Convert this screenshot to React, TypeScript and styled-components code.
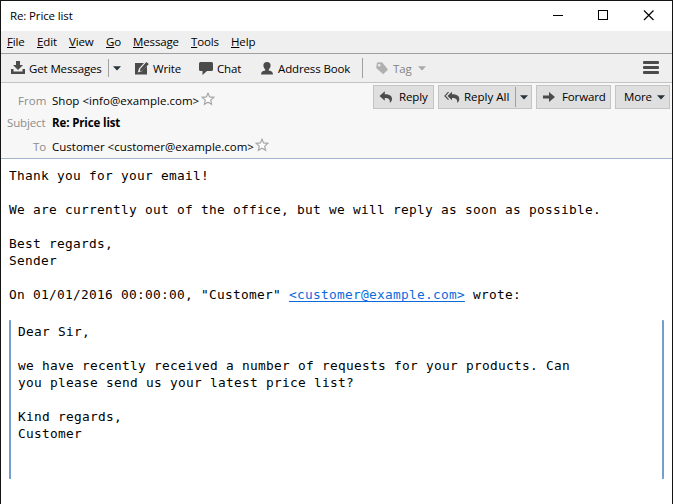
import React from "react";
import styled, { createGlobalStyle } from "styled-components";

const GlobalStyle = createGlobalStyle`
  * { box-sizing: border-box; }
  body { margin: 0; background: #fff; }
`;

const Window = styled.div`
  display: flex;
  flex-direction: column;
  width: 673px;
  height: 504px;
  overflow: hidden;
  border: 1px solid #141414;
  border-bottom: 0;
  background: #fff;
  color: #000;
  font: 11.5px/16px "Open Sans", "Noto Sans", sans-serif;
  white-space: nowrap;
`;

const TitleBar = styled.header`
  display: flex;
  flex: none;
  height: 30px;
  padding-left: 9px;
`;

const Label = styled.span<{ $w: number; $ls?: number }>`
  display: block;
  flex: none;
  width: ${(p) => p.$w}px;
  letter-spacing: ${(p) => p.$ls ?? -0.13}px;
`;

const Title = styled(Label)`
  margin-top: 7px;
`;

const WindowControls = styled.div`
  display: flex;
  margin-left: auto;
  svg { display: block; }
`;

const MenuBar = styled.nav`
  display: flex;
  flex: none;
  gap: 12px;
  height: 23px;
  padding: 3px 0 0 6px;
  background: #efefef;
  border-bottom: 1px solid #a0a0a0;
  u { text-underline-offset: 1px; text-decoration-thickness: 1px; }
`;

const Toolbar = styled.div`
  display: flex;
  flex: none;
  align-items: center;
  height: 29px;
  padding: 0 13px 0 10px;
  background: #efefef;
  border-bottom: 1px solid #c3c3c3;
`;

const ToolItem = styled.div<{ $gap: number; $ml?: number; $muted?: boolean }>`
  display: flex;
  align-items: center;
  gap: ${(p) => p.$gap}px;
  margin-left: ${(p) => p.$ml ?? 0}px;
  color: ${(p) => (p.$muted ? "#838383" : "#000")};
  ${Label} { margin-top: 2px; }
`;

const Divider = styled.span<{ $h: number; $ml: number; $mr: number }>`
  flex: none;
  width: 1px;
  height: ${(p) => p.$h}px;
  margin: 0 ${(p) => p.$mr}px 0 ${(p) => p.$ml}px;
  background: #a0a0a0;
`;

const Icon = styled.svg`
  display: block;
  flex: none;
`;

const MenuIcon = styled.div`
  display: grid;
  gap: 2px;
  margin: -1px 0 0 auto;
  span {
    width: 16px;
    height: 3px;
    border-radius: 1px;
    background: #4b4b4b;
  }
`;

const MessageHeader = styled.section`
  display: flex;
  flex: none;
  justify-content: space-between;
  height: 76px;
  padding: 2px 2px 0 6px;
  background: #f7f7f7;
  border-bottom: 1px solid #a3b5cb;
`;

const Fields = styled.div`
  display: grid;
  grid-template-columns: 40px auto;
  grid-template-rows: 22px 24px 23px;
  column-gap: 5px;
  align-items: start;
  padding-top: 8px;
`;

const FieldName = styled.div`
  display: flex;
  justify-content: flex-end;
  color: #8c8c8c;
`;

const FieldValue = styled.div`
  display: flex;
  gap: 2px;
  svg { margin-top: -1px; }
`;

const Subject = styled(Label)`
  font-weight: 700;
`;

const Actions = styled.div`
  display: flex;
  gap: 4px;
  align-items: flex-start;
`;

const ActionButton = styled.div<{ $w: number; $pl: number; $gap: number }>`
  display: flex;
  align-items: center;
  gap: ${(p) => p.$gap}px;
  width: ${(p) => p.$w}px;
  height: 24px;
  padding-left: ${(p) => p.$pl}px;
  border: 1px solid #c4c4c4;
  background: #dfdfdf;
`;

const SplitEnd = styled.span`
  display: flex;
  align-items: center;
  align-self: stretch;
  gap: 4px;
  margin-left: -3px;
`;

const Message = styled.main`
  flex: 1;
  padding: 8px 8px 0;
  font: 12.8px/17px "DejaVu Sans Mono", monospace;
  letter-spacing: 0.294px;
  white-space: pre;
`;

const Link = styled.a`
  color: #0b6bdc;
  text-decoration: underline;
  text-underline-offset: 2px;
  text-decoration-thickness: 1px;
  text-decoration-skip-ink: none;
`;

const Quote = styled.blockquote`
  height: 159px;
  margin: 17px 0 0;
  padding: 3px 7px 0;
  border: solid #729fcf;
  border-width: 0 2px;
  border-radius: 1px;
`;

const Caret = ({ color = "#27343c" }: { color?: string }) => (
  <Icon width="8" height="5" viewBox="0 0 8 5" fill={color}>
    <path d="M0 0.300h8L4 4.600z" />
  </Icon>
);

const Star = () => (
  <Icon width="14" height="14" viewBox="0 0 14 14" fill="#fdfdfd" stroke="#a6a6a6" strokeWidth="1.200">
    <path d="M7 1.200l1.600 3.700 4.200.4-3.100 2.800.9 4.200L7 10.200l-3.600 2.100.9-4.200L1.200 5.300l4.200-.4z" />
  </Icon>
);

const ReplyArrow = () => (
  <Icon width="14" height="12" viewBox="0 0 14 12" fill="#4b4b4b">
    <path d="M0.500 5L5.800 0.300v2.900c4.800 0 7.200 1.600 7.200 4.700 0 1.700-.9 3-2.300 3.900.7-3-.6-4.800-4.900-4.800v2.800z" />
  </Icon>
);

const menus: [string, number][] = [
  ["File", 18], ["Edit", 20], ["View", 25], ["Go", 15], ["Message", 46], ["Tools", 28], ["Help", 26],
];

export default function App() {
  return (
    <>
      <GlobalStyle />
      <Window>
        <TitleBar>
          <Title $w={64}>Re: Price list</Title>
          <WindowControls>
            <svg width="138" height="30" viewBox="0 0 138 30" fill="none" stroke="#000" shapeRendering="crispEdges">
              <path d="M19 14.500h10M64.500 9.500h9v9h-9z" />
              <path d="M110 9.500l9.500 9.500M119.500 9.500L110 19" shapeRendering="auto" strokeWidth="1.150" />
            </svg>
          </WindowControls>
        </TitleBar>
        <MenuBar>
          {menus.map(([name, w]) => (
            <Label key={name} $w={w}><u>{name[0]}</u>{name.slice(1)}</Label>
          ))}
        </MenuBar>
        <Toolbar>
          <ToolItem $gap={4}>
            <Icon width="14" height="14" viewBox="0 0 14 14" fill="#4b4b4b">
              <path d="M5 0h4v4h3L7 9 2 4h3zM0 8h2.500v2.500h9V8H14v5H0z" />
            </Icon>
            <Label $w={73}>Get Messages</Label>
          </ToolItem>
          <Divider $h={18} $ml={6} $mr={4} />
          <Caret />
          <ToolItem $gap={4} $ml={14}>
            <Icon width="14" height="13" viewBox="0 0 14 13" fill="#4b4b4b">
              <path d="M0 1h9L4 6.500 2.800 10.500l4-1.300L12 4v8.500H0z" />
              <path d="M11.300 0l2.500 2-6 6.500-3 .9.800-3z" />
            </Icon>
            <Label $w={29}>Write</Label>
          </ToolItem>
          <ToolItem $gap={4} $ml={17}>
            <Icon width="14" height="13" viewBox="0 0 14 13" fill="#4b4b4b">
              <path d="M1.500 0h11Q14 0 14 1.500v6Q14 9 12.500 9H8l-4.500 4V9h-2Q0 9 0 7.500v-6Q0 0 1.500 0z" />
            </Icon>
            <Label $w={26}>Chat</Label>
          </ToolItem>
          <ToolItem $gap={5} $ml={18}>
            <Icon width="12" height="13" viewBox="0 0 12 13" fill="#4b4b4b">
              <path d="M6 0c2.400 0 3.600 1.300 3.600 3.300 0 1.800-.8 3.200-1.800 4.100v1c2.900.5 4.200 1.500 4.200 4.100H0c0-2.600 1.300-3.600 4.200-4.100v-1c-1-.9-1.800-2.300-1.800-4.100C2.400 1.300 3.600 0 6 0z" />
            </Icon>
            <Label $w={73}>Address Book</Label>
          </ToolItem>
          <Divider $h={20} $ml={11} $mr={13} />
          <ToolItem $gap={5} $muted>
            <Icon width="12" height="13" viewBox="0 0 12 13" fill="#b0b0b0" fillRule="evenodd">
              <path d="M1 .5L6 .2 12 7.500 7.300 12.300.2 6zM3.200 2a1.300 1.300 0 100 2.600 1.300 1.300 0 000-2.600z" />
            </Icon>
            <Label $w={20}>Tag</Label>
            <Caret color="#a9a9a9" />
          </ToolItem>
          <MenuIcon><span /><span /><span /></MenuIcon>
        </Toolbar>
        <MessageHeader>
          <Fields>
            <FieldName><Label $w={29} $ls={0.1}>From</Label></FieldName>
            <FieldValue><Label $w={147} $ls={0.03}>Shop &lt;info@example.com&gt;</Label><Star /></FieldValue>
            <FieldName><Label $w={40}>Subject</Label></FieldName>
            <FieldValue><Subject $w={70}>Re: Price list</Subject></FieldValue>
            <FieldName><Label $w={14}>To</Label></FieldName>
            <FieldValue><Label $w={201} $ls={0}>Customer &lt;customer@example.com&gt;</Label><Star /></FieldValue>
          </Fields>
          <Actions>
            <ActionButton $w={61} $pl={5} $gap={6}>
              <ReplyArrow />
              <Label $w={30}>Reply</Label>
            </ActionButton>
            <ActionButton $w={94} $pl={5} $gap={4}>
              <Icon width="16" height="12" viewBox="0 0 16 12" fill="#4b4b4b">
                <path d="M4.500 1.200L1 4.900l3.500 3.700" fill="none" stroke="#4b4b4b" strokeWidth="1.200" />
                <path d="M3.500 5L8 .8v2.400c4.900 0 7.300 1.600 7.300 4.700 0 1.700-.9 3-2.300 3.900.7-3-.6-4.800-5-4.800v2.200z" />
              </Icon>
              <Label $w={50} $ls={0}>Reply All</Label>
              <SplitEnd><Divider $h={20} $ml={0} $mr={0} /><Caret /></SplitEnd>
            </ActionButton>
            <ActionButton $w={75} $pl={6} $gap={7}>
              <Icon width="12" height="10" viewBox="0 0 12 10" fill="#4b4b4b">
                <path d="M0 3.500h6V0l6 5-6 5V6.500H0z" />
              </Icon>
              <Label $w={44}>Forward</Label>
            </ActionButton>
            <ActionButton $w={55} $pl={8} $gap={4}>
              <Label $w={29}>More</Label>
              <Caret />
            </ActionButton>
          </Actions>
        </MessageHeader>
        <Message>
          {'Thank you for your email!\n\nWe are currently out of the office, but we will reply as soon as possible.\n\nBest regards,\nSender\n\nOn 01/01/2016 00:00:00, "Customer" '}
          <Link>&lt;customer@example.com&gt;</Link>
          {" wrote:"}
          <Quote>
            {"Dear Sir,\n\nwe have recently received a number of requests for your products. Can\nyou please send us your latest price list?\n\nKind regards,\nCustomer"}
          </Quote>
        </Message>
      </Window>
    </>
  );
}
